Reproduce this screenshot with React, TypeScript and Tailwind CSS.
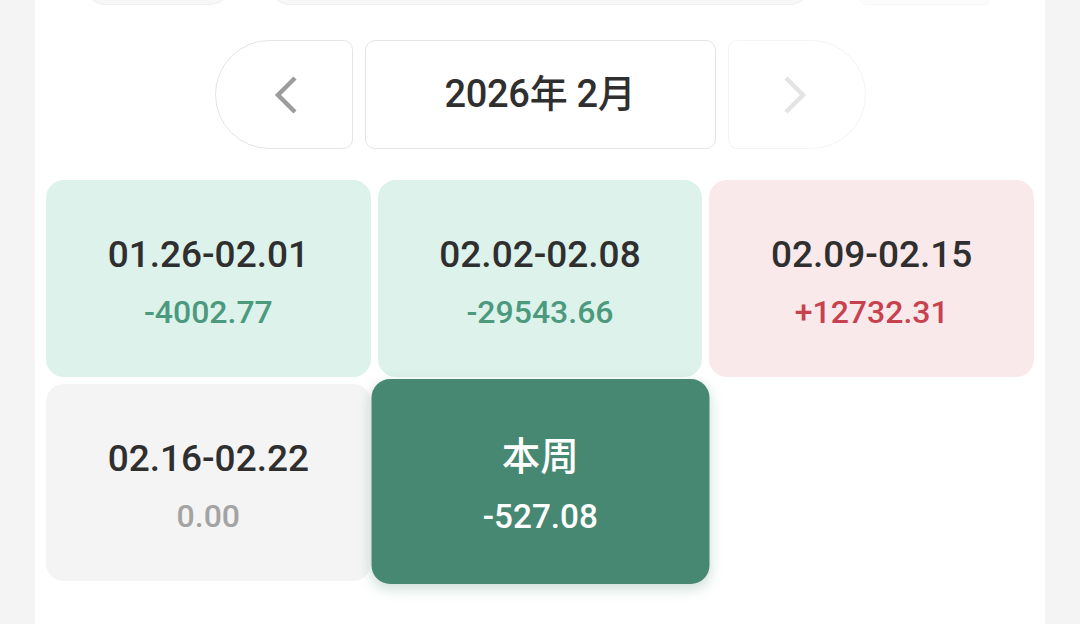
import React from "react";

const FONT = { fontFamily: 'Roboto, "Noto Sans CJK SC", "Noto Sans", sans-serif' };

type Week = { range: string; amount: string; kind: "down" | "up" | "zero" | "current" };

const weeks: Week[] = [
  { range: "01.26-02.01", amount: "-4002.77", kind: "down" },
  { range: "02.02-02.08", amount: "-29543.66", kind: "down" },
  { range: "02.09-02.15", amount: "+12732.31", kind: "up" },
  { range: "02.16-02.22", amount: "0.00", kind: "zero" },
  { range: "本周", amount: "-527.08", kind: "current" },
];

function Card({ w }: { w: Week }) {
  const bg =
    w.kind === "down"
      ? "bg-[#dcf2eb]"
      : w.kind === "up"
      ? "bg-[#f9e9eb]"
      : w.kind === "zero"
      ? "bg-[#f4f4f4]"
      : "bg-[#478872] scale-[1.04] -translate-y-[1px] shadow-[0_4px_12px_rgba(71,136,114,0.28)] relative z-10";
  const rangeColor = w.kind === "current" ? "text-white" : "text-[#2f2f2f]";
  const amountColor =
    w.kind === "down"
      ? "text-[#4c9a7e]"
      : w.kind === "up"
      ? "text-[#c8414e]"
      : w.kind === "zero"
      ? "text-[#a3a3a3]"
      : "text-white";
  return (
    <div className={`h-[197px] pt-[6px] rounded-[18px] flex flex-col items-center justify-center ${bg}`}>
      <div className={`text-[37px] leading-[46px] font-medium ${rangeColor}`}>{w.range}</div>
      <div className={`mt-[15px] text-[32px] leading-[38px] font-medium ${amountColor}`}>{w.amount}</div>
    </div>
  );
}

export default function App() {
  return (
    <div className="w-[1080px] h-[624px] bg-[#f4f4f4] overflow-hidden flex justify-center" style={FONT}>
      <div className="w-[1010px] h-full bg-white flex flex-col">
        <div className="flex h-[40px] -mt-[35px] shrink-0">
          <div className="ml-[50px] w-[145px] h-full rounded-[20px] bg-[#f7f7f7] border border-[#eeeeee]" />
          <div className="ml-[40px] w-[540px] h-full rounded-[20px] bg-[#f7f7f7] border border-[#eeeeee]" />
          <div className="ml-[50px] w-[130px] h-full rounded-[6px] bg-[#fcfcfc] border border-[#f7f7f7]" />
        </div>

        <div className="mt-[35px] flex justify-center gap-[12px] shrink-0">
          <div className="w-[138px] h-[109px] rounded-l-[56px] rounded-r-[10px] border border-[#e4e4e4] bg-white flex items-center justify-center">
            <svg width="30" height="42" viewBox="0 0 30 42" className="ml-[2px]">
              <polyline points="25,4 8,21 25,38" fill="none" stroke="#9c9c9c" strokeWidth="4.5" strokeLinecap="butt" strokeLinejoin="miter" />
            </svg>
          </div>
          <div className="w-[351px] h-[109px] rounded-[10px] border border-[#e4e4e4] bg-white flex items-center justify-center">
            <span className="text-[38px] font-medium text-[#2f2f2f] tracking-[-0.3px]">2026年 2月</span>
          </div>
          <div className="w-[138px] h-[109px] rounded-r-[56px] rounded-l-[10px] border border-[#f4f4f4] bg-white flex items-center justify-center">
            <svg width="30" height="42" viewBox="0 0 30 42" className="-ml-[2px]">
              <polyline points="5,4 22,21 5,38" fill="none" stroke="#e4e4e4" strokeWidth="4.5" strokeLinecap="butt" strokeLinejoin="miter" />
            </svg>
          </div>
        </div>

        <div className="mt-[31px] px-[11px] grid grid-cols-3 gap-[7px]">
          {weeks.map((w) => (
            <Card key={w.range} w={w} />
          ))}
        </div>
      </div>
    </div>
  );
}
